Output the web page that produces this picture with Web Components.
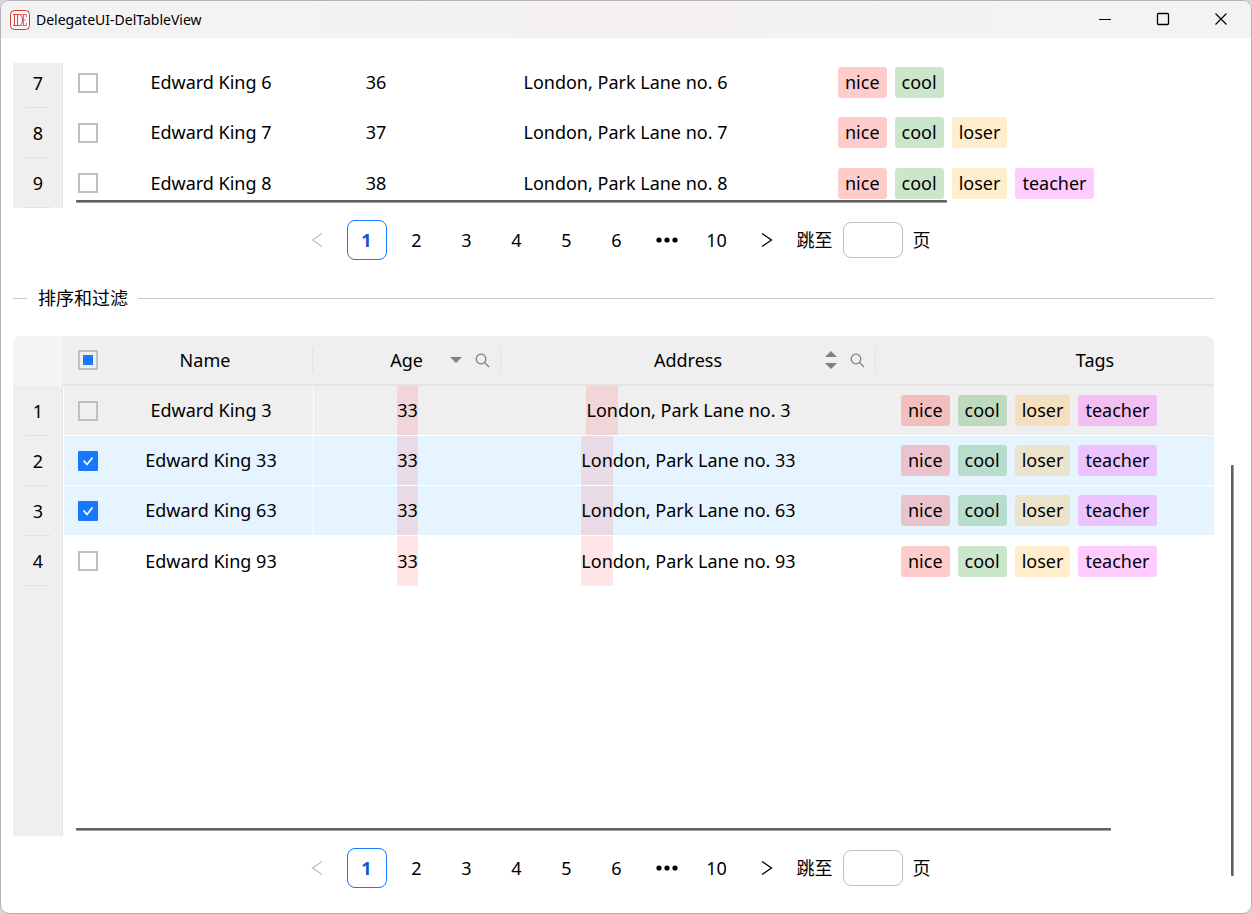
<!DOCTYPE html>
<html lang="zh-CN">
<head>
<meta charset="utf-8">
<title>DelegateUI-DelTableView</title>
<style>
  html, body { margin: 0; min-height: 100vh; background: #d9d9d9; }
  body { font: 18px/24px "Noto Sans", "Noto Sans CJK SC", sans-serif; color: #000; }
</style>
</head>
<body>
<app-window heading="DelegateUI-DelTableView">
  <del-table id="basic"></del-table>
  <del-pager></del-pager>
  <del-divider>排序和过滤</del-divider>
  <del-table id="filtered"></del-table>
  <del-pager></del-pager>
</app-window>

<script>
class AppWindow extends HTMLElement {
  constructor() {
    super();
    this.attachShadow({ mode: 'open' }).innerHTML = `
    <style>
      :host { display: flex; flex-direction: column; box-sizing: border-box; min-height: 100vh;
              border: 1px solid #b2b2b2; border-radius: 9px; overflow: hidden; background: #fff; }
      header { display: flex; align-items: center; height: 37px; padding: 0 1px 0 9px;
               background: linear-gradient(90deg, #f3f3f3 25%, #f5f0f1 50%, #f3f3f3 80%); }
      .logo { flex: none; margin-right: 6px; }
      h1 { margin: 0; flex: 1; font: 14px/20px "Noto Sans", sans-serif; }
      button { width: 58px; height: 37px; padding: 0 0 2px; border: 0; background: none;
               display: grid; place-items: center; }
      button svg { fill: none; stroke: #000; }
      .body { flex: 1; display: flex; gap: 17px; padding: 0 17px 0 12px; }
      main { flex: 1; min-width: 0; display: flex; flex-direction: column; padding: 25px 0; }
      .track { width: 3px; display: flex; flex-direction: column; justify-content: flex-end; padding-bottom: 37px; }
      .thumb { height: 49%; border-radius: 1px; background: #5f5f5f; border-right: 1px solid #a0a0a0; box-sizing: border-box; }
    </style>
    <header>
      <svg class="logo" width="20" height="20" viewBox="0 0 20 20" aria-hidden="true">
        <rect x=".5" y=".5" width="19" height="19" rx="4" fill="#fff6f6" stroke="#cf3a3f"/>
        <g fill="none" stroke="#d0484c">
          <path d="M3 4.5H9Q12.5 5 12.5 10T9 15.5H3M4.5 4.5V15.5M7.5 4.5V15.5"/>
          <path d="M10.500 4.500H16.500V7M13.500 4.500V15.500M11 15.500H16.500V13M13.500 10H15.500" stroke-opacity=".75"/>
        </g>
      </svg>
      <h1></h1>
      <button aria-label="最小化"><svg width="14" height="14"><path d="M1 7.500H13"/></svg></button>
      <button aria-label="最大化"><svg width="14" height="14"><rect x="1.5" y="1.5" width="11" height="11" rx="1" stroke-width="1.3"/></svg></button>
      <button aria-label="关闭"><svg width="14" height="14"><path d="M1.5 1.5L12.5 12.5M12.5 1.5L1.5 12.5" stroke-width="1.2"/></svg></button>
    </header>
    <div class="body">
      <main><slot></slot></main>
      <div class="track"><div class="thumb"></div></div>
    </div>`;
    this.shadowRoot.querySelector('h1').textContent = this.getAttribute('heading');
  }
}

class DelDivider extends HTMLElement {
  constructor() {
    super();
    this.attachShadow({ mode: 'open' }).innerHTML = `
    <style>
      :host { display: flex; align-items: center; margin: 26px 0; height: 24px; }
      :host::before, :host::after { content: ""; height: 1px; background: #c9c9c9; }
      :host::before { width: 14px; }
      :host::after { flex: 1; }
      h2 { margin: 0; padding: 0 10px 0 11px; font: inherit; }
    </style>
    <h2><slot></slot></h2>`;
  }
}

class DelPager extends HTMLElement {
  constructor() {
    super();
    const page = n => `<button${n === 1 ? ' class="current" aria-current="page"' : ''}>${n}</button>`;
    this.attachShadow({ mode: 'open' }).innerHTML = `
    <style>
      :host { display: block; margin-top: 12px; }
      nav { display: flex; justify-content: center; align-items: center; gap: 10px; }
      button { box-sizing: border-box; width: 40px; height: 40px; padding: 0; border: 1px solid transparent;
               border-radius: 8px; background: none; font: inherit; color: inherit;
               display: grid; place-items: center; }
      .current { border-color: #1677ff; color: #0f55d6; font-weight: 700; }
      svg { fill: none; stroke: #000; stroke-width: 1.3; }
      button:disabled svg { stroke: #bfbfbf; }
      label { display: flex; align-items: center; gap: 10px; }
      input { box-sizing: border-box; width: 60px; height: 36px; padding: 0 8px; border: 1px solid #bfbfbf;
              border-radius: 8px; background: #fff; font: inherit; outline: none; }
    </style>
    <nav aria-label="分页">
      <button disabled aria-label="上一页"><svg width="16" height="16"><path d="M13 1.5L3.500 8L13 14.5"/></svg></button>
      ${[1, 2, 3, 4, 5, 6].map(page).join('')}
      <button aria-label="更多"><svg width="22" height="6"><g fill="#000" stroke="none"><circle cx="3" cy="3" r="2.6"/><circle cx="11" cy="3" r="2.6"/><circle cx="19" cy="3" r="2.6"/></g></svg></button>
      ${page(10)}
      <button aria-label="下一页"><svg width="16" height="16"><path d="M3 1.500L12.500 8L3 14.500"/></svg></button>
      <label>跳至<input type="text">页</label>
    </nav>`;
  }
}

class DelTag extends HTMLElement {
  constructor() {
    super();
    this.attachShadow({ mode: 'open' }).innerHTML = `
    <style>
      :host { display: block; padding: 0 7px; border-radius: 3px; line-height: 31px; background: rgba(255,0,0,.2); }
      :host([kind=cool]) { background: rgba(0,128,0,.2); }
      :host([kind=loser]) { background: rgba(255,165,0,.2); }
      :host([kind=teacher]) { background: rgba(255,0,255,.2); }
    </style><slot></slot>`;
  }
}

const SORT_DOWN = '<path d="M0 7H12L6 13Z"/>';
const SORT_BOTH = '<path d="M0 7H12L6 1ZM0 13H12L6 19Z"/>';
const tools = sort => `<span class="tools">
  <button aria-label="排序"><svg width="12" height="20" fill="#808080">${sort}</svg></button>
  <button aria-label="筛选"><svg width="15" height="15" fill="none" stroke="#808080" stroke-width="1.3"><circle cx="6" cy="6" r="4.8"/><path d="M9.5 9.5L14 14"/></svg></button></span>`;

class DelTable extends HTMLElement {
  constructor() {
    super();
    this.attachShadow({ mode: 'open' });
  }
  set config({ columns, head, rows }) {
    const mark = (text, part) => part ? `<mark>${part}</mark>${text.slice(part.length)}` : text;
    this.shadowRoot.innerHTML = `
    <style>
      :host { display: flex; flex-direction: column; position: relative; overflow: hidden;
              background: linear-gradient(#e4e4e4, #e4e4e4) 49px 0 / 1px 100% no-repeat,
                          linear-gradient(#efefef, #efefef) 0 0 / 49px 100% no-repeat; }
      :host(#basic) { height: 145px; justify-content: flex-end; --rest: 330px; }
      :host(#filtered) { height: 500px; border-radius: 8px 8px 0 0; --rest: 166px; }
      table { table-layout: fixed; border-collapse: separate; border-spacing: 0; width: 1px; }
      th, td { box-sizing: border-box; height: 50px; padding: 0; font-weight: 400; text-align: center;
               white-space: nowrap; overflow: hidden; }
      thead th { background: #efefef; border-bottom: 2px solid #e4e4e4; }
      thead td { background: #f5f5f5; }
      thead .cell { border-right: 1px solid #e2e2e2; height: 24px; }
      thead th:last-child .cell { border: 0; }
      .cell { display: grid; grid-template-columns: 1fr auto 1fr; align-items: center; }
      .cell > .label { grid-column: 2; }
      .tools { justify-self: end; display: flex; align-items: center; gap: 13px; margin-right: 10px; }
      .tools button { display: block; padding: 0; border: 0; background: none; }
      .tools svg { display: block; }
      .pick { display: flex; align-items: center; padding-left: 15px; }
      .pick .label { flex: 1; }
      tbody .pick { padding-left: 14px; }
      tbody .pick .label { margin-left: 11px; }
      input { appearance: none; box-sizing: border-box; flex: none; width: 20px; height: 20px; margin: 0;
              border: 2px solid #bfbfbf; background: none; }
      input:checked { border: 0; border-radius: 1px;
              background: #1677ff url("data:image/svg+xml,%3Csvg xmlns='http://www.w3.org/2000/svg' width='20' height='20'%3E%3Cpath d='M5.500 9.500L9 13.500L14.500 6.500' fill='none' stroke='%23fff' stroke-width='1.7'/%3E%3C/svg%3E") center no-repeat; }
      input:indeterminate { background: linear-gradient(#1677ff, #1677ff) center / 10px 10px no-repeat; }
      tbody th > div { box-sizing: border-box; width: 26px; height: 50px; margin: 0 auto; line-height: 50px; border-bottom: 1px solid #e2e2e2; }
      tbody td { border-bottom: 1px solid #fff; line-height: 49px; }
      tbody tr:last-child td { border-bottom: 0; line-height: 50px; }
      tbody td:nth-child(2), tbody td:nth-child(3) { border-left: 1px solid #fff; }
      .hover td { background: #efefef; }
      .selected td { background: #e6f4ff; }
      mark { display: inline-block; color: inherit; background: rgba(255,0,0,.1); }
      .tags { display: flex; gap: 8px; padding-left: 25px; }
      .bar { position: absolute; left: 63px; bottom: 5px; width: calc(100% - var(--rest)); height: 3px;
             box-sizing: border-box; border-radius: 1px; background: #5f5f5f; border-bottom: 1px solid #a0a0a0; }
    </style>
    <table>
      <colgroup>${columns.map(w => `<col style="width:${w}px">`).join('')}</colgroup>
      ${head ? `<thead><tr><td></td>
        <th scope="col"><div class="cell" style="display:flex"><div class="pick" style="flex:1"><input type="checkbox" class="all" aria-label="全选"><span class="label">Name</span></div></div></th>
        <th scope="col"><div class="cell"><span class="label">Age</span>${tools(SORT_DOWN)}</div></th>
        <th scope="col"><div class="cell"><span class="label">Address</span>${tools(SORT_BOTH)}</div></th>
        <th scope="col"><div class="cell"><span class="label">Tags</span></div></th></tr></thead>` : ''}
      <tbody>${rows.map(r => `<tr class="${r.state || ''}">
        <th scope="row"><div>${r.no}</div></th>
        <td><label class="pick"><input type="checkbox"${r.state === 'selected' ? ' checked' : ''}><span class="label">Edward King ${r.id}</span></label></td>
        <td>${mark(String(r.age), head && '33')}</td>
        <td>${mark('London, Park Lane no. ' + r.id, head && 'Lon')}</td>
        <td><div class="tags">${r.tags.map(t => `<del-tag kind="${t}">${t}</del-tag>`).join('')}</div></td></tr>`).join('')}
      </tbody>
    </table>
    <div class="bar"></div>`;
    const all = this.shadowRoot.querySelector('.all');
    if (all) all.indeterminate = true;
  }
}

customElements.define('app-window', AppWindow);
customElements.define('del-divider', DelDivider);
customElements.define('del-pager', DelPager);
customElements.define('del-tag', DelTag);
customElements.define('del-table', DelTable);

const TAGS = ['nice', 'cool', 'loser', 'teacher'];
document.getElementById('basic').config = {
  columns: [50, 250, 125, 375, 500],
  rows: [6, 7, 8].map((id, i) => ({ no: id + 1, id, age: 30 + id, tags: TAGS.slice(0, i + 2) }))
};
document.getElementById('filtered').config = {
  columns: [50, 250, 188, 375, 438],
  head: true,
  rows: [3, 33, 63, 93].map((id, i) => ({
    no: i + 1, id, age: 33, tags: TAGS, state: ['hover', 'selected', 'selected', ''][i]
  }))
};
</script>
</body>
</html>
